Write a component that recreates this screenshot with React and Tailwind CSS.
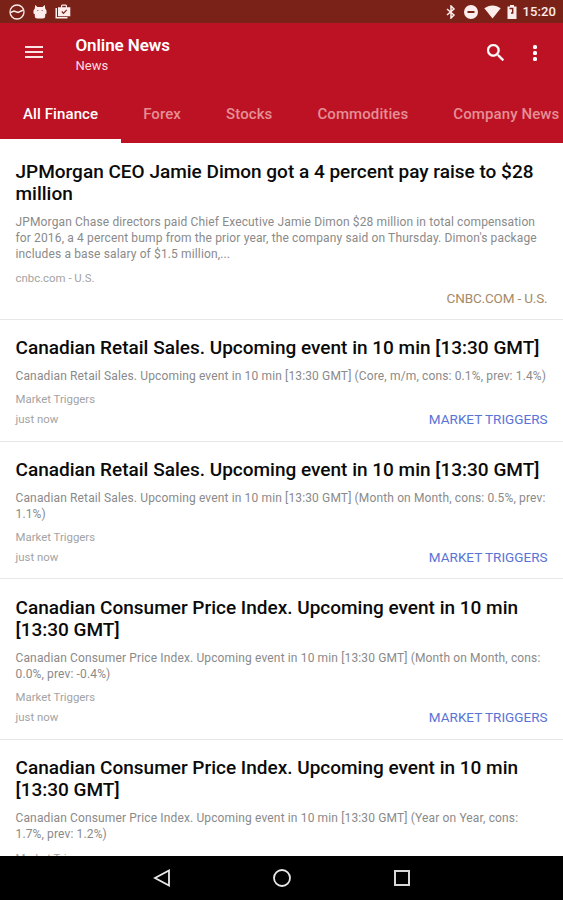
const tabs = [
  { name: "All Finance", className: "text-white" },
  { name: "Forex", className: "text-[#e58f95]" },
  { name: "Stocks", className: "text-[#e58f95]" },
  { name: "Commodities", className: "text-[#e58f95]" },
  { name: "Company News", className: "text-[#e58f95]" },
];

const articles = [
  {
    id: 1,
    title: ["JPMorgan CEO Jamie Dimon got a 4 percent pay raise to $28", "million"],
    text: [
      "JPMorgan Chase directors paid Chief Executive Jamie Dimon $28 million in total compensation",
      "for 2016, a 4 percent bump from the prior year, the company said on Thursday. Dimon's package",
      "includes a base salary of $1.5 million,...",
    ],
    source: "cnbc.com - U.S.",
    time: "",
    color: "text-[#a58a68] tracking-[-0.16px]",
  },
  {
    id: 2,
    title: ["Canadian Retail Sales. Upcoming event in 10 min [13:30 GMT]"],
    text: [
      "Canadian Retail Sales. Upcoming event in 10 min [13:30 GMT] (Core, m/m, cons: 0.1%, prev: 1.4%)",
    ],
    source: "Market Triggers",
    time: "just now",
    color: "text-[#5a73d6]",
  },
  {
    id: 3,
    title: ["Canadian Retail Sales. Upcoming event in 10 min [13:30 GMT]"],
    text: [
      "Canadian Retail Sales. Upcoming event in 10 min [13:30 GMT] (Month on Month, cons: 0.5%, prev:",
      "1.1%)",
    ],
    source: "Market Triggers",
    time: "just now",
    color: "text-[#5a73d6]",
  },
  {
    id: 4,
    title: ["Canadian Consumer Price Index. Upcoming event in 10 min", "[13:30 GMT]"],
    text: [
      "Canadian Consumer Price Index. Upcoming event in 10 min [13:30 GMT] (Month on Month, cons:",
      "0.0%, prev: -0.4%)",
    ],
    source: "Market Triggers",
    time: "just now",
    color: "text-[#5a73d6]",
  },
  {
    id: 5,
    title: ["Canadian Consumer Price Index. Upcoming event in 10 min", "[13:30 GMT]"],
    text: [
      "Canadian Consumer Price Index. Upcoming event in 10 min [13:30 GMT] (Year on Year, cons:",
      "1.7%, prev: 1.2%)",
    ],
    source: "Market Triggers",
    time: "just now",
    color: "text-[#5a73d6]",
  },
];

function StatusBar() {
  return (
    <div className="flex h-[23px] shrink-0 items-center bg-[#7b2218] text-[#fbeeec]">
      {/* Notifications */}
      <svg className="ml-[9px] h-4 w-4" viewBox="0 0 16 16" fill="none" stroke="currentColor">
        <circle cx="8" cy="8" r="7" strokeWidth="1.3" />
        <path d="M1.5 8.5 5 7l4 1.500L14.500 6" strokeWidth="1.500" />
      </svg>
      <svg className="ml-[8px] h-[14px] w-[14px]" viewBox="0 0 14 14" fill="currentColor">
        <path d="M2.200 0 4.500 2h5L11.800 0l.4 3.500 1.300 2v3l-1.300.7v1.800a2.500 2.500 0 0 1-2.500 2.500H4.300a2.500 2.500 0 0 1-2.500-2.500V9.200L.5 8.500v-3l1.300-2z" />
        <path d="M4 5.500h1.500M8.500 5.500H10" stroke="#b98078" strokeWidth="1" />
      </svg>
      <svg className="ml-[8px] h-[15px] w-4" viewBox="0 0 16 15" fill="currentColor">
        <path d="M.5 4v10.500H12.500V13H2V4z" />
        <path fillRule="evenodd" d="M3 3.200h3V1.500L7 .5h4l1 1v1.700h3.300v9H3zM7.200 1.700v1.500h3.600V1.700z" />
        <path d="m6.800 7.500 1.700 1.800 3.200-3.500" fill="none" stroke="#7b2218" strokeWidth="1.200" />
      </svg>

      <div className="ml-auto flex items-center pr-[7px]">
        <svg className="h-[14px] w-[10px]" viewBox="0 0 10 14" fill="none" stroke="currentColor" strokeWidth="1.500">
          <path d="m1 4 7 6-3 3V1l3 3-7 6" />
        </svg>
        <svg className="ml-[8px] h-[14px] w-[14px]" viewBox="0 0 14 14">
          <circle cx="7" cy="7" r="7" fill="currentColor" />
          <path d="M3.500 7h7" stroke="#7b2218" strokeWidth="2" />
        </svg>
        <svg className="ml-[6px] h-[14px] w-[17px]" viewBox="0 0 17 14" fill="currentColor">
          <path d="M.3 3.300C5-.6 12-.6 16.700 3.300L8.500 13.500z" />
        </svg>
        <svg className="ml-[6px] h-[14px] w-[10px]" viewBox="0 0 10 14">
          <path d="M.5 1.500H3V0h4v1.500h2.500V14h-9z" fill="currentColor" />
          <path d="M2.500 3.500h3.200v4.500H4" stroke="#7b2218" strokeWidth="1.400" fill="none" />
        </svg>
        <span className="ml-[6px] text-[13px] font-medium tracking-[0.1px]">15:20</span>
      </div>
    </div>
  );
}

function Header() {
  return (
    <header className="h-[120px] shrink-0 bg-[#bc1224]">
      <div className="flex h-[67px] pl-[25px] pr-[26px]">
        <div className="mt-[23px] flex w-[18px] flex-col gap-[3px]">
          <div className="h-[2px] bg-[#fbe3e5]" />
          <div className="h-[2px] bg-[#fbe3e5]" />
          <div className="h-[2px] bg-[#fbe3e5]" />
        </div>
        <div className="ml-[32.500px] mt-[12px] whitespace-nowrap text-white">
          <h1 className="text-[17px] leading-5 font-semibold tracking-[-0.1px]">Online News</h1>
          <p className="text-[13px] leading-[21px] text-[#fbdde0]">News</p>
        </div>
        <svg className="ml-auto mt-[21px] h-[17px] w-[17px]" viewBox="3 3 17.500 17.500" fill="#fff" stroke="#fff" strokeWidth="0.4">
          <path d="M15.500 14h-.79l-.28-.27A6.471 6.471 0 0 0 16 9.500 6.500 6.500 0 1 0 9.500 16c1.610 0 3.090-.59 4.230-1.570l.27.280v.79l5 4.990L20.490 19l-4.990-5zm-6 0C7.010 14 5 11.990 5 9.500S7.010 5 9.500 5 14 7.010 14 9.500 11.990 14 9.500 14z" />
        </svg>
        <div className="ml-[29.500px] mt-[22px] flex flex-col gap-[2px]">
          <div className="h-1 w-1 rounded-[1.500px] bg-white" />
          <div className="h-1 w-1 rounded-[1.500px] bg-white" />
          <div className="h-1 w-1 rounded-[1.500px] bg-white" />
        </div>
      </div>
      <nav className="flex h-[49px] items-center gap-[45px] overflow-hidden pb-[1px] pl-[23px] text-[15px] font-medium tracking-[0.1px] whitespace-nowrap">
        {tabs.map((tab) => (
          <span key={tab.name} className={tab.className}>
            {tab.name}
          </span>
        ))}
      </nav>
      <div className="h-1 w-[121px] bg-white" />
    </header>
  );
}

function Article({ article }) {
  return (
    <article className="shrink-0 border-b border-[#e8e8e8] px-[15.500px] pt-[17.200px] pb-[13.200px] whitespace-nowrap">
      <h2 className="text-[19px] leading-[22.300px] font-medium text-[#0a0a0a]">
        {article.title.map((line) => (
          <span key={line} className="block">
            {line}
          </span>
        ))}
      </h2>
      <p className="mt-[8.600px] text-[12px] leading-[16.300px] tracking-[0.138px] text-[#8a8a8a]">
        {article.text.map((line) => (
          <span key={line} className="block">
            {line}
          </span>
        ))}
      </p>
      <p className="mt-[7px] text-[11.400px] leading-4 text-[#a3a3a3]">{article.source}</p>
      <div className="mt-1 flex h-4 items-center justify-between leading-4">
        <span className="text-[11.400px] text-[#a3a3a3]">{article.time}</span>
        <span className={`text-[13.500px] uppercase ${article.color}`}>{article.source}</span>
      </div>
    </article>
  );
}

function NavigationBar() {
  return (
    <div className="flex h-[44px] shrink-0 items-center justify-center gap-[102px] bg-black">
      <svg className="h-[18px] w-[18px]" viewBox="0 0 18 18" fill="none" stroke="#e8e8e8" strokeWidth="1.800">
        <path d="M16 1.500v15L2 9z" />
      </svg>
      <svg className="h-[18px] w-[18px]" viewBox="0 0 18 18" fill="none" stroke="#e8e8e8" strokeWidth="1.800">
        <circle cx="9" cy="9" r="8" />
      </svg>
      <svg className="h-[18px] w-[18px]" viewBox="0 0 18 18" fill="none" stroke="#d8d8d8" strokeWidth="2">
        <path d="M2 2h14v14H2z" />
      </svg>
    </div>
  );
}

export default function App() {
  return (
    <div className="flex h-screen w-full flex-col overflow-hidden bg-white font-[Roboto,sans-serif]">
      <StatusBar />
      <Header />
      <main className="flex min-h-0 flex-1 flex-col overflow-y-auto pt-[0.500px] [scrollbar-width:none]">
        {articles.map((article) => (
          <Article key={article.id} article={article} />
        ))}
      </main>
      <NavigationBar />
    </div>
  );
}
